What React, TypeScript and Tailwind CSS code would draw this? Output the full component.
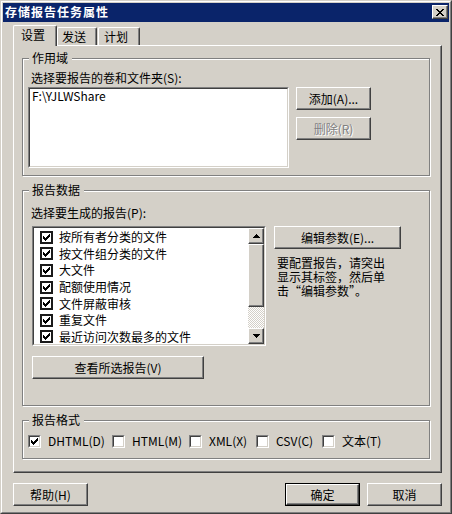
import React from "react";

const raised =
  "border border-t-white border-l-white border-r-[#404040] border-b-[#404040] shadow-[inset_-1px_-1px_0_#808080] bg-[#d4d0c8]";
const sunkOuter =
  "border border-t-[#808080] border-l-[#808080] border-r-white border-b-white";
const sunkInner =
  "border border-t-[#404040] border-l-[#404040] border-r-[#d4d0c8] border-b-[#d4d0c8]";

function Btn({
  children,
  className = "",
  disabled = false,
  def = false,
}: {
  children: React.ReactNode;
  className?: string;
  disabled?: boolean;
  def?: boolean;
}) {
  const inner = (
    <div
      className={`${raised} w-full h-full flex items-center justify-center leading-[14px] ${
        disabled ? "text-[#808080] [text-shadow:1px_1px_0_#fff]" : "text-black"
      }`}
    >
      {children}
    </div>
  );
  if (def) return <div className={`border border-black ${className}`}>{inner}</div>;
  return <div className={className}>{inner}</div>;
}

function CheckMark() {
  return (
    <svg width="7" height="7" viewBox="0 0 7 7" shapeRendering="crispEdges">
      <path
        d="M0 2h1v3h-1z M1 3h1v3h-1z M2 4h1v3h-1z M3 3h1v3h-1z M4 2h1v3h-1z M5 1h1v3h-1z M6 0h1v3h-1z"
        fill="#000"
      />
    </svg>
  );
}

function Check({ checked }: { checked: boolean }) {
  return (
    <div className={`w-[13px] h-[13px] shrink-0 ${sunkOuter}`}>
      <div className={`w-full h-full ${sunkInner} bg-white flex items-center justify-center`}>
        {checked && <CheckMark />}
      </div>
    </div>
  );
}

function ListCheck() {
  return (
    <div className="w-[13px] h-[13px] shrink-0 border-2 border-[#1a1a1a] bg-white flex items-center justify-center">
      <CheckMark />
    </div>
  );
}

function Arrow({ down = false }: { down?: boolean }) {
  return (
    <svg width="7" height="4" viewBox="0 0 7 4" shapeRendering="crispEdges">
      <path
        d={
          down
            ? "M0 0h7v1h-7z M1 1h5v1h-5z M2 2h3v1h-3z M3 3h1v1h-1z"
            : "M3 0h1v1h-1z M2 1h3v1h-3z M1 2h5v1h-5z M0 3h7v1h-7z"
        }
        fill="#000"
      />
    </svg>
  );
}

function Group({
  label,
  className = "",
  children,
}: {
  label: string;
  className?: string;
  children?: React.ReactNode;
}) {
  return (
    <div
      className={`relative border border-[#808080] shadow-[inset_1px_1px_0_#fff,1px_1px_0_#fff] ${className}`}
    >
      <span className="absolute -top-[8px] left-[6px] pl-[3px] pr-[4px] bg-[#d4d0c8] leading-[14px]">
        {label}
      </span>
      {children}
    </div>
  );
}

const reports = [
  "按所有者分类的文件",
  "按文件组分类的文件",
  "大文件",
  "配额使用情况",
  "文件屏蔽审核",
  "重复文件",
  "最近访问次数最多的文件",
];

export default function App() {
  return (
    <div className="w-[452px] h-[514px] bg-[#d4d0c8] border border-t-[#d4d0c8] border-l-[#d4d0c8] border-r-[#404040] border-b-[#404040] font-['Noto_Sans_CJK_SC',sans-serif] text-[12px] text-black">
      <div className="w-full h-full border border-t-white border-l-white border-r-[#808080] border-b-[#808080] p-px flex flex-col">
        {/* Title bar */}
        <div className="h-[19px] shrink-0 bg-[#0a246a] flex items-start justify-between">
          <span className="pl-[2px] pt-[2px] text-white font-bold text-[12px] tracking-[1px] leading-[14px]">
            存储报告任务属性
          </span>
          <div className={`${raised} w-[16px] h-[14px] mt-[2px] mr-[1px] flex items-center justify-center`}>
            <svg width="8" height="7" viewBox="0 0 8 7" shapeRendering="crispEdges">
              <path
                d="M0 0h2v1h-2z M6 0h2v1h-2z M1 1h2v1h-2z M5 1h2v1h-2z M2 2h4v1h-4z M3 3h2v1h-2z M2 4h4v1h-4z M1 5h2v1h-2z M5 5h2v1h-2z M0 6h2v1h-2z M6 6h2v1h-2z"
                fill="#000"
              />
            </svg>
          </div>
        </div>

        {/* Tabs */}
        <div className="mt-[3px] h-[20px] shrink-0 flex items-end pl-[10px]">
          <div className="relative z-10 -mb-px w-[44px] h-[21px] bg-[#d4d0c8] border-t border-l border-r border-t-white border-l-white border-r-[#404040] shadow-[inset_-1px_0_0_#808080] rounded-t-[2px] pl-[7px] pt-[2px] leading-[14px]">
            设置
          </div>
          <div className="w-[40px] h-[18px] border-t border-l border-r border-t-white border-l-white border-r-[#404040] shadow-[inset_-1px_0_0_#808080] rounded-t-[2px] pl-[4px] pt-[2px] leading-[14px]">
            发送
          </div>
          <div className="ml-[1px] w-[42px] h-[18px] border-t border-l border-r border-t-white border-l-white border-r-[#404040] shadow-[inset_-1px_0_0_#808080] rounded-t-[2px] pl-[5px] pt-[2px] leading-[14px]">
            计划
          </div>
        </div>

        {/* Tab panel */}
        <div className="ml-[10px] w-[429px] h-[428px] shrink-0 border border-t-white border-l-white border-r-[#404040] border-b-[#404040] shadow-[inset_-1px_-1px_0_#808080] flex flex-col pl-[8px] pr-[11px] pt-[12px]">
          {/* 作用域 */}
          <Group label="作用域" className="h-[118px] shrink-0 pt-[12px] pl-[5px]">
            <div className="ml-[3px] leading-[14px]">选择要报告的卷和文件夹(S):</div>
            <div className="mt-[2px] flex">
              <div className={`w-[261px] h-[81px] ${sunkOuter}`}>
                <div className={`w-full h-full ${sunkInner} bg-white pl-[2px] leading-[14px]`}>
                  F:\YJLWShare
                </div>
              </div>
              <div className="ml-[7px] flex flex-col">
                <Btn className="w-[75px] h-[23px]">添加(A)...</Btn>
                <Btn className="mt-[7px] w-[75px] h-[23px]" disabled>
                  删除(R)
                </Btn>
              </div>
            </div>
          </Group>

          {/* 报告数据 */}
          <Group label="报告数据" className="mt-[14px] h-[216px] shrink-0 pt-[15px] pl-[9px]">
            <div className="-ml-px leading-[14px]">选择要生成的报告(P):</div>
            <div className="mt-[6px] flex">
              <div className={`w-[234px] h-[120px] ${sunkOuter}`}>
                <div className={`w-full h-full ${sunkInner} bg-white flex`}>
                  <div className="flex-1 overflow-hidden pt-[1px]">
                    {reports.map((r) => (
                      <div key={r} className="h-[16.6px] flex items-center pl-[6px]">
                        <ListCheck />
                        <span className="ml-[6px] leading-[14px] whitespace-nowrap">{r}</span>
                      </div>
                    ))}
                  </div>
                  <div className="w-[16px] h-full flex flex-col">
                    <div className={`${raised} h-[16px] shrink-0 flex items-center justify-center`}>
                      <Arrow />
                    </div>
                    <div className={`${raised} h-[63px] shrink-0`} />
                    <div className="flex-1 [background:repeating-conic-gradient(#d4d0c8_0%_25%,#ffffff_0%_50%)_0_0/2px_2px]" />
                    <div className={`${raised} h-[16px] shrink-0 flex items-center justify-center`}>
                      <Arrow down />
                    </div>
                  </div>
                </div>
              </div>
              <div className="ml-[8px] flex flex-col">
                <Btn className="w-[127px] h-[23px]">编辑参数(E)...</Btn>
                <div className="mt-[7px] ml-[3px] leading-[14px]">
                  要配置报告，请突出
                  <br />
                  显示其标签，然后单
                  <br />
                  击“编辑参数”。
                </div>
              </div>
            </div>
            <Btn className="mt-[10px] w-[172px] h-[23px]">查看所选报告(V)</Btn>
          </Group>

          {/* 报告格式 */}
          <Group label="报告格式" className="mt-[14px] h-[39px] shrink-0 pt-[13px] pl-[5px]">
            <div className="flex items-center">
              <div className="w-[84px] flex items-center">
                <Check checked />
                <span className="ml-[7px] leading-[14px]">DHTML(D)</span>
              </div>
              <div className="w-[77px] flex items-center">
                <Check checked={false} />
                <span className="ml-[7px] leading-[14px]">HTML(M)</span>
              </div>
              <div className="w-[67px] flex items-center">
                <Check checked={false} />
                <span className="ml-[7px] leading-[14px]">XML(X)</span>
              </div>
              <div className="w-[66px] flex items-center">
                <Check checked={false} />
                <span className="ml-[7px] leading-[14px]">CSV(C)</span>
              </div>
              <div className="flex items-center">
                <Check checked={false} />
                <span className="ml-[7px] leading-[14px]">文本(T)</span>
              </div>
            </div>
          </Group>
        </div>

        {/* Bottom buttons */}
        <div className="mt-[10px] flex pl-[10px] pr-[7px]">
          <Btn className="w-[75px] h-[23px]">帮助(H)</Btn>
          <div className="flex-1" />
          <Btn className="w-[75px] h-[23px]" def>
            确定
          </Btn>
          <Btn className="ml-[7px] w-[75px] h-[23px]">取消</Btn>
        </div>
      </div>
    </div>
  );
}
